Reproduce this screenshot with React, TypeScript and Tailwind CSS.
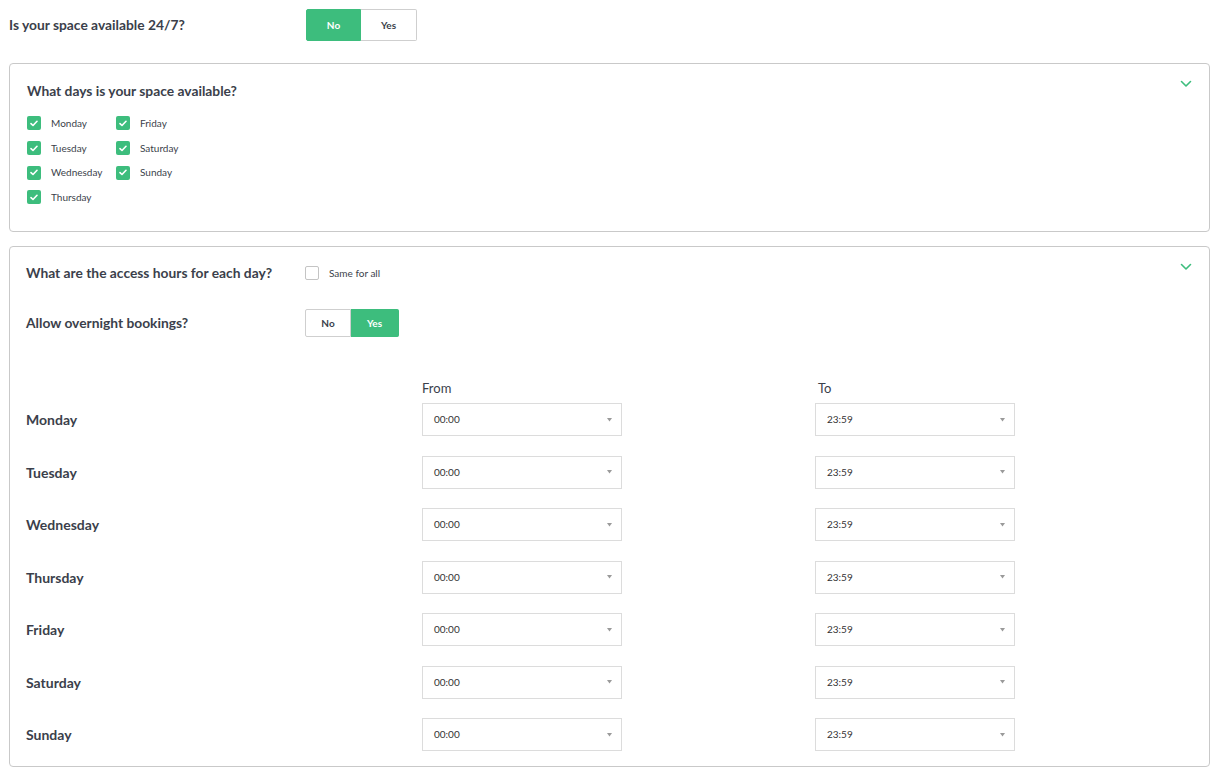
import React from "react";

const days = ["Monday", "Tuesday", "Wednesday", "Thursday", "Friday", "Saturday", "Sunday"];

function Check({ checked }: { checked: boolean }) {
  return checked ? (
    <span className="flex h-[14px] w-[14px] items-center justify-center rounded-[2px] bg-[#3dbd7d]">
      <svg width="8" height="7" viewBox="0 0 8 7" fill="none">
        <path d="M1 3.6 3 5.5 7 1.3" stroke="white" strokeWidth="1.6" strokeLinecap="round" strokeLinejoin="round" />
      </svg>
    </span>
  ) : (
    <span className="block h-[14px] w-[14px] rounded-[2px] border border-[#c4c4c4] bg-white" />
  );
}

function Chevron() {
  return (
    <svg width="12" height="8" viewBox="0 0 12 8" fill="none">
      <path d="M1.5 1.5 6 6 10.5 1.5" stroke="#3dbd7d" strokeWidth="1.6" strokeLinecap="round" strokeLinejoin="round" />
    </svg>
  );
}

function Toggle({ value, w1, w2, h }: { value: "No" | "Yes"; w1: string; w2: string; h: string }) {
  const on = "bg-[#3dbd7d] text-white border-[#3dbd7d]";
  const off = "bg-white text-[#3b3f4b] border-[#cfcfcf]";
  return (
    <div className={`flex ${h} text-[10px] font-bold`}>
      <div className={`flex items-center justify-center border ${w1} ${value === "No" ? on : off} rounded-l-[2px]`}>No</div>
      <div className={`flex items-center justify-center border border-l-0 ${w2} ${value === "Yes" ? on : off} rounded-r-[2px]`}>Yes</div>
    </div>
  );
}

function Select({ value }: { value: string }) {
  return (
    <div className="flex h-[33px] w-[200px] items-center justify-between border border-[#dcdcdc] bg-white pl-[11px] pr-[9px] text-[10px] text-[#333]">
      <span>{value}</span>
      <svg width="5" height="4" viewBox="0 0 5 4">
        <path d="M0 0h5L2.5 3.5z" fill="#9a9a9a" />
      </svg>
    </div>
  );
}

export default function App() {
  return (
    <div
      className="min-h-screen w-[1218px] bg-white text-[#3b3f4b]"
      style={{ fontFamily: "Lato, 'Noto Sans', sans-serif" }}
    >
      <div className="pl-[9px] pr-[8px] pt-[9px]">
        {/* 24/7 question */}
        <div className="flex items-center">
          <div className="w-[297px] text-[13.8px] font-bold">Is your space available 24/7?</div>
          <Toggle value="No" w1="w-[55px]" w2="w-[56px]" h="h-[32px]" />
        </div>

        {/* Available days */}
        <div className="relative mt-[22px] h-[169px] rounded-[4px] border border-[#c9c9c9] pl-[17px] pt-[17px]">
          <div className="absolute right-[17px] top-[16px]">
            <Chevron />
          </div>
          <div className="text-[13.8px] font-bold leading-[20px]">What days is your space available?</div>
          <div className="mt-[10px] grid grid-flow-col grid-cols-[89px_89px] grid-rows-[repeat(4,24.7px)] justify-start">
            {days.map((d) => (
              <div key={d} className="flex items-center">
                <Check checked />
                <span className="ml-[10px] text-[10px]">{d}</span>
              </div>
            ))}
          </div>
        </div>

        {/* Access hours */}
        <div className="relative mt-[14px] h-[521px] rounded-[4px] border border-[#c9c9c9] pl-[16px] pt-[16px]">
          <div className="absolute right-[17px] top-[16px]">
            <Chevron />
          </div>
          <div className="flex h-[20px] items-center">
            <div className="w-[279px] text-[13.8px] font-bold">What are the access hours for each day?</div>
            <Check checked={false} />
            <span className="ml-[10px] text-[10px]">Same for all</span>
          </div>
          <div className="mt-[26px] flex items-center">
            <div className="w-[279px] text-[13.8px] font-bold">Allow overnight bookings?</div>
            <Toggle value="Yes" w1="w-[46px]" w2="w-[48px]" h="h-[28px]" />
          </div>

          <div className="mt-[41px] grid grid-cols-[396px_393px_200px]">
            <div />
            <div className="text-[13px] leading-[20px]">From</div>
            <div className="pl-[3px] text-[13px] leading-[20px]">To</div>
          </div>
          <div className="mt-[5px] flex flex-col gap-[19.5px]">
            {days.map((d) => (
              <div key={d} className="grid grid-cols-[396px_393px_200px] items-center">
                <div className="text-[14px] font-bold">{d}</div>
                <Select value="00:00" />
                <Select value="23:59" />
              </div>
            ))}
          </div>
        </div>
      </div>
    </div>
  );
}
